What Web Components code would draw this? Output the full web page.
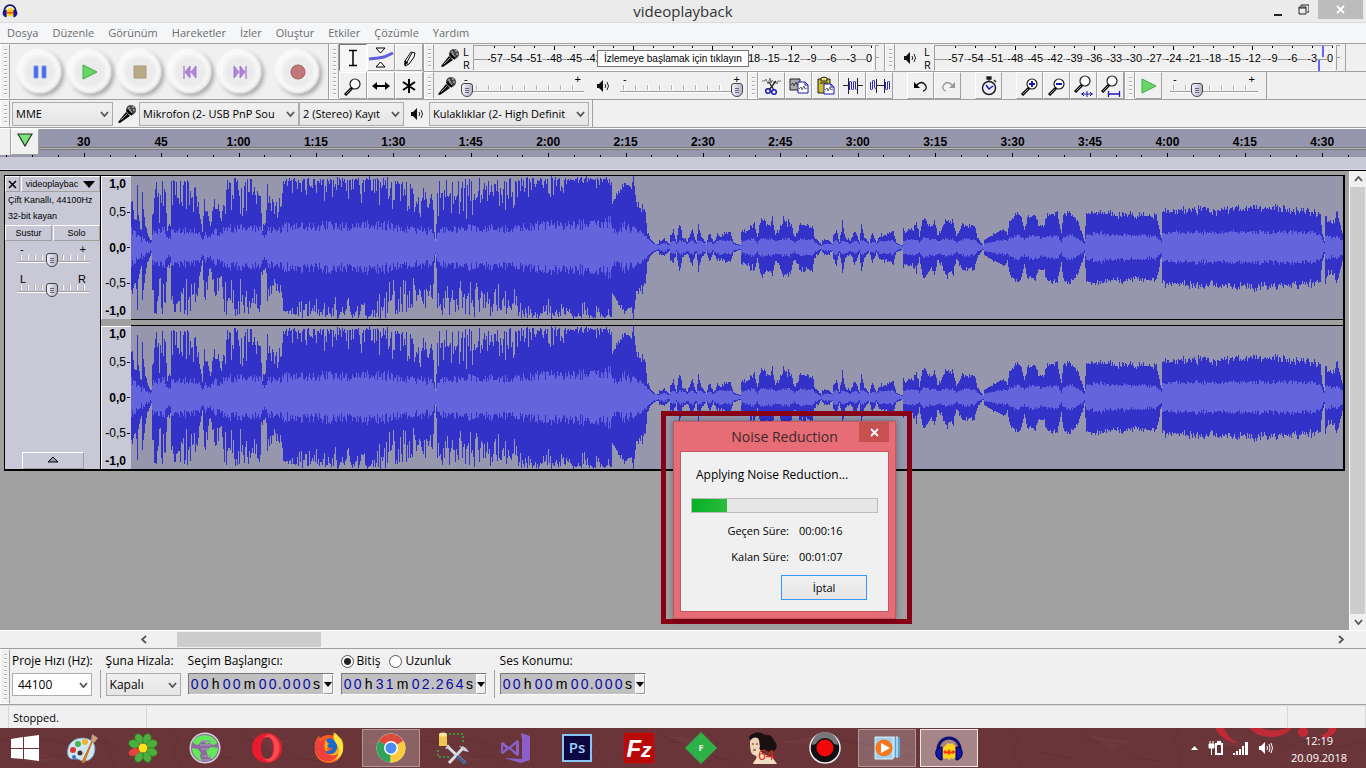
<!DOCTYPE html>
<html lang="tr">
<head>
<meta charset="utf-8">
<meta name="viewport" content="width=device-width, initial-scale=1">
<title>videoplayback</title>
<style>
    html, body {
        margin: 0;
        height: 100%;
    }

    body {
        --ui: "Open Sans", "Noto Sans", sans-serif;
        --arial: "Liberation Sans", Arial, sans-serif;
        --line: #a0a0a0;
        --face: #f0f0f0;
        --track: #c8c8d6;
        --wave-back: #9696ac;
        font: 11px/16px var(--ui);
        color: #000;
        background: var(--face);
        overflow: hidden;
    }
</style>
</head>
<body>
<audio-editor></audio-editor>

<script>
/* icons, each one is [width, height, markup] */

const MIC = `<path d="M2 19L1 18 9 8l4 4L3 19z" fill="#111"/><path d="M4 16l6-6" stroke="#999"/>
    <circle cx="14" cy="6" r="5" fill="#444"/><path d="M11 4h2M15 3h2M12 6h2M16 6h2M13 8h2M14 1h1" stroke="#ddd"/><path d="M10 6l5 5" stroke="#000" stroke-width="2"/>`;
const LENS = `<path d="M2 19l7-7" stroke="#000" stroke-width="3"/><path d="M3 18l5-5" stroke="#999"/>
    <circle cx="12" cy="8" r="5" fill="#fff" stroke="#222" stroke-width="1.2"/>`;
const HEADPHONES = `<path d="M4 22V15a11 11 0 0 1 22 0v7" fill="none" stroke="#101070" stroke-width="3"/>
    <path d="M9 23V14l3-3 2-2 2 1 2-1 3 3 1 3v8l-3 2-2-1-2 2-2-2-3 1z" fill="#ffd21c"/>
    <path d="M9 18l2-2 2 2 2-3 2 3 2-2 3 2-3 2-2-1-2 2-2-2-2 1z" fill="#ff3a10"/>
    <path d="M8 13c-5 0-7 4-6 8 1 3 3 5 6 5zM22 13c5 0 7 4 6 8-1 3-3 5-6 5z" fill="#1515b0" stroke="#00003c"/>`;

const ICONS = {
    app: [30, 28, HEADPHONES],
    minimize: [10, 12, `<path d="M1 11h8" stroke="#222" stroke-width="2"/>`],
    restore: [11, 11, `<path d="M3 2V1h8v7H9" fill="none" stroke="#222"/><path d="M1 3h7v7H1z" fill="none" stroke="#222"/><path d="M1 4h7" stroke="#222"/>`],
    close: [9, 9, `<path d="M1 1l7 7M8 1L1 8" stroke="#fff" stroke-width="1.8"/>`],
    cross: [9, 9, `<path d="M1 1l7 7M8 1L1 8" stroke="#000" stroke-width="1.5"/>`],
    pause: [14, 14, `<path d="M1 1h4v12H1zM9 1h4v12H9z" fill="#4468f0" stroke="#7d93e6"/>`],
    play: [16, 16, `<path d="M1 1l14 7-14 7z" fill="#67d867" stroke="#3fa84a"/>`],
    stop: [14, 14, `<path d="M1 1h12v12H1z" fill="#b8aa88" stroke="#a89a78"/>`],
    back: [14, 14, `<path d="M1 1v13" stroke="#8a5cb8"/><path d="M7 1v12L2 7zM13 1v12L8 7z" fill="#b184dd" stroke="#8f62bb" stroke-width=".7"/>`],
    forward: [14, 14, `<path d="M13 1v13" stroke="#8a5cb8"/><path d="M7 1v12l5-6zM1 1v12l5-6z" fill="#b184dd" stroke="#8f62bb" stroke-width=".7"/>`],
    record: [16, 16, `<circle cx="8" cy="8" r="7" fill="#c27878" stroke="#a05656"/>`],
    cursor: [20, 20, `<path d="M6 2.5h8M6 17.5h8M10 3v14" stroke="#000" stroke-width="1.5"/>`],
    envelope: [26, 22, `<path d="M8 1h9l-4.500 5zM8 20h9l-4.500-5z" fill="#fff" stroke="#000"/><path d="M1 12l9-1 6-1 9-4" fill="none" stroke="#5c5ce0" stroke-width="3"/>`],
    pencil: [20, 20, `<path d="M6 13l6-9 4 1-1 4-5 7-4 2z" fill="#fff" stroke="#000"/><path d="M8 14l5-9M6 17v-4l3 2" stroke="#000" fill="#000"/>`],
    zoom: [20, 20, LENS],
    shift: [20, 14, `<path d="M4 7h12" stroke="#000" stroke-width="2"/><path d="M6 3v8L1 7zM14 3v8l5-4z"/>`],
    multi: [20, 20, `<path d="M10 3v14M4 6l12 8M16 6L4 14" stroke="#000" stroke-width="2"/>`],
    mic: [20, 20, MIC],
    speaker: [14, 14, `<path d="M1 5h2l4-4v12L3 9H1z" fill="#111"/><path d="M9 5q1.500 2 0 4M11 3q3 4 0 8" fill="none" stroke="#222"/>`],
    cut: [22, 20, `<path d="M1 5h3l1-2 2 5 2-6 1 5 1-3 2 3 1-2 2 3 1-3h3" fill="none" stroke="#777"/><path d="M8 14l7-9M13 14L8 6" stroke="#222" stroke-width="1.3"/><circle cx="7" cy="15" r="2.300" fill="none" stroke="#1a1ab0" stroke-width="1.500"/><circle cx="13" cy="16" r="2.300" fill="none" stroke="#1a1ab0" stroke-width="1.500"/>`],
    copy: [20, 18, `<path d="M1 2h10v11H1z" fill="#aaa" stroke="#222"/><path d="M2 8l2-2 1 3 2-4 1 3 2-1" fill="none" stroke="#444"/><path d="M9 5h7l3 3v8H9z" fill="#fff" stroke="#1a1ab0"/><path d="M16 5v3h3" fill="none" stroke="#1a1ab0"/><path d="M10 12l2-2 1 3 2-4 1 3 2-1" fill="none" stroke="#666"/>`],
    paste: [20, 20, `<path d="M2 3h12v14H2z" fill="#c8bd35" stroke="#222"/><path d="M5 5V2l3-1 3 1v3z" fill="#e8e070" stroke="#222"/><path d="M4 7h8" stroke="#222"/><path d="M8 8h7l3 3v7H8z" fill="#fff" stroke="#1a1ab0"/><path d="M15 8v3h3" fill="none" stroke="#1a1ab0"/><path d="M9 14l2-2 1 3 2-4 1 3 2-1" fill="none" stroke="#666"/>`],
    trim: [20, 18, `<g shape-rendering="crispEdges" fill="#222"><path d="M0 8h5v1H0zM15 8h5v1h-5zM5 1h1v16H5zM14 1h1v16h-1z"/></g><path d="M6.500 13V5l1-1 1 1v7l1 1 1-1V5l1-1 1 1v7l1 1" fill="none" stroke="#2a2ac0"/>`],
    silence: [20, 18, `<g shape-rendering="crispEdges" fill="#222"><path d="M6 8h8v1H6zM6 2h1v14H6zM14 2h1v14h-1z"/></g><path d="M.500 5v7l1 1 1-1V4l1-1 1 1v6l1 2M15.500 5v6l1 2 1-1V5l1-1 1 1v7" fill="none" stroke="#2a2ac0"/>`],
    undo: [16, 14, `<path d="M3 7q6-7 10 0 1 4-3 5" fill="none" stroke="#111" stroke-width="1.300"/><path d="M1 3v6h6z"/>`],
    redo: [16, 14, `<path d="M13 7Q7 0 3 7q-1 4 3 5" fill="none" stroke="#999" stroke-width="1.300"/><path d="M15 3v6H9z" fill="#999"/>`],
    watch: [18, 20, `<circle cx="9" cy="12" r="6.500" fill="#eef" stroke="#222" stroke-width="1.500"/><path d="M7 1h4v2H7zM9 3v2M14 4l2 2" stroke="#222" stroke-width="1.300"/><path d="M6 9l3 4 4-3" fill="none" stroke="#1a1ab0" stroke-width="1.500"/>`],
    zoomin: [20, 20, LENS + `<path d="M9 8h6M12 5v6" stroke="#1a1ab0" stroke-width="2"/>`],
    zoomout: [20, 20, LENS + `<path d="M9 8h6" stroke="#1a1ab0" stroke-width="2"/>`],
    fitsel: [20, 22, `<g transform="translate(-1 -2)">${LENS}</g><path d="M7 19h12M10 17l-2 2 2 2M16 17l2 2-2 2M13 16v6" fill="none" stroke="#1a1ab0"/>`],
    fitall: [20, 22, `<g transform="translate(-1 -2)">${LENS}</g><path d="M7 19h12M7.500 16v6M18.500 16v6" stroke="#1a1ab0" stroke-width="1.300"/>`],
    pin: [16, 14, `<path d="M1 1h14L8 13z" fill="#7ee07e" stroke="#1b3a1b" stroke-width="1.200"/>`],
    drop: [9, 6, `<path d="M1 1l3.500 4L8 1" fill="none" stroke="#555" stroke-width="1.800"/>`],
    up: [9, 6, `<path d="M1 5l3.500-4L8 5" fill="none" stroke="#555" stroke-width="1.800"/>`],
    left: [6, 9, `<path d="M5 1L1 4.500 5 8" fill="none" stroke="#555" stroke-width="1.800"/>`],
    right: [6, 9, `<path d="M1 1l4 3.500L1 8" fill="none" stroke="#555" stroke-width="1.800"/>`],
    black: [12, 7, `<path d="M0 0h12L6 7z"/>`],
    small: [8, 5, `<path d="M0 0h8L4 5z"/>`],
    collapse: [12, 7, `<path d="M1 6h10L6 1z" fill="#9696ac" stroke="#000"/>`],

    windows: [28, 26, `<path d="M0 4l12-2v11H0zM13 2L28 0v13H13zM0 14h12v10L0 23zM13 14h15v12l-15-2z" fill="#fff"/>`],
    paint: [34, 32, `<path d="M4 17C5 9 15 4 24 7c8 3 8 11 5 17-3 5-9 6-13 4-3-2-5-1-8-1-4-1-5-5-4-10z" fill="#cfe6f4" stroke="#7fb0cf"/><circle cx="16" cy="21" r="2.500" fill="#4b3035"/><circle cx="9" cy="18" r="3" fill="#d83a2e"/><circle cx="14" cy="12" r="3" fill="#4bb34f"/><circle cx="21" cy="10" r="3" fill="#f2b22c"/><circle cx="10" cy="25" r="2" fill="#3a70c8"/><path d="M30 5L20 31l-2-1z" fill="#f08a24" stroke="#c9661a"/><path d="M27 9l1-7 6 4-4 5z" fill="#c9a27c"/>`],
    flower: [30, 30, `<g fill="#4cae3c" stroke="#2d7f2d" stroke-width=".6"><ellipse cx="11" cy="6" rx="4" ry="5.500" transform="rotate(-22 11 6)"/><ellipse cx="19" cy="6" rx="4" ry="5.500" transform="rotate(22 19 6)"/><ellipse cx="24" cy="11" rx="5.500" ry="4" transform="rotate(-22 24 11)"/><ellipse cx="24" cy="19" rx="5.500" ry="4" transform="rotate(22 24 19)"/><ellipse cx="19" cy="24" rx="4" ry="5.500" transform="rotate(-22 19 24)"/><ellipse cx="11" cy="24" rx="4" ry="5.500" transform="rotate(22 11 24)"/><ellipse cx="6" cy="11" rx="5.500" ry="4" transform="rotate(22 6 11)"/></g><ellipse cx="6" cy="19" rx="5.500" ry="3.600" transform="rotate(-22 6 19)" fill="#e2453a"/><circle cx="15" cy="15" r="4.500" fill="#ffe21a"/>`],
    globe: [32, 32, `<circle cx="16" cy="16" r="15.500" fill="#d5d2dc"/><circle cx="16" cy="16" r="14" fill="#8c6a9c"/><path d="M4 9c3-4 7-6 12-6l5 1c4 2 6 4 7 7l-3 2-5-2-3 1-1-3-4 1-3 3-4-1zM3 16l6 1 3 4-1 3 2 5c-5-1-10-7-10-13zM17 17l6-2 6 1c0 5-3 9-6 11l-4-2-1-4z" fill="#62e858"/><path d="M12 9h10M11 13h12M12 17h8M13 24h9M12 28h9" stroke="#a58bb4" stroke-width="1.500"/>`],
    opera: [30, 30, `<path fill-rule="evenodd" d="M15 0a15 15 0 1 0 0 30 15 15 0 0 0 0-30zm0 4c4 0 6 5 6 11s-2 11-6 11-6-5-6-11 2-11 6-11z" fill="#e81c2e"/><path d="M18 1a15 15 0 0 1 0 28c-2 0-4-1-6-4 2 1 3 1 4 1 4-1 6-5 6-11S20 5 16 4c-1 0-2 0-4 1 2-3 4-4 6-4z" fill="#fb4a4e"/>`],
    firefox: [32, 32, `<circle cx="16" cy="17" r="14" fill="#ff5a1f"/><path d="M2 18C1 11 4 6 6 4l1 5c2-1 4-2 6-1l3-1-2 4 4 2-4 3 1 5c4 3 9-1 9-6 0-6-6-8-3-15 1 3 4 5 5 8l2-2c3 5 3 12 0 17-6 9-24 11-26-5z" fill="#ffab1a"/><path d="M2 18C1 11 4 6 6 4l1 5c2-1 4-2 6-1-2 3-2 6-1 9 2 6 8 8 13 5-2 6-8 9-14 7C5 27 3 23 2 18z" fill="#f0413a"/><path d="M13 8c2-3 7-2 9 1 3 4 3 9-1 12-3 2-7 1-9-2 4 1 6-1 8-3-3 1-4-1-6-2 1-2 3-2 3-2-2-1-3-2-4-4z" fill="#1769d2"/><path d="M22 1c5 4 9 9 8 17-1 5-4 8-7 10 4-7 4-12 0-17-3-4-2-7-1-10z" fill="#ffe53b"/>`],
    chrome: [32, 32, `<circle cx="16" cy="16" r="14.500" fill="#ddd"/><path d="M16 16L3.500 9A14.500 14.500 0 0 1 28.500 9z" fill="#dd4b3a"/><path d="M16 16l12.500-7A14.500 14.500 0 0 1 15 30.500z" fill="#f8cc3c"/><path d="M16 16l-1 14.500A14.500 14.500 0 0 1 3.500 9z" fill="#2fa35a"/><circle cx="16" cy="16" r="7" fill="#fff"/><circle cx="16" cy="16" r="5.500" fill="#4b8bf5"/>`],
    tools: [34, 32, `<path d="M13 2h14v9M2 18v7h12" fill="none" stroke="#3fae3f" stroke-dasharray="2 2" stroke-width="1.500"/><path d="M3 2h8v12H3z" fill="#eec553"/><ellipse cx="7" cy="2.500" rx="4" ry="2" fill="#fbe79b"/><path d="M12 15l17 16M28 15L13 31" stroke="#d8dde2" stroke-width="3"/><path d="M21 24l9 8" stroke="#3f5f92" stroke-width="3"/><path d="M23 14l7 2 3 4-5-1zM9 17l3-5 3 4z" fill="#c9ced4"/>`],
    vs: [32, 32, `<path d="M22 1l9 3v24l-9 3-17-5 18 1V7z" fill="#8a60c8"/><path fill-rule="evenodd" d="M2 11l2-1 6 5 8-7 2 1v14l-2 1-8-7-6 5-2-1zm2 3v5l3-3zm13-2l-5 4 5 4z" fill="#8a60c8"/>`],
    ps: [30, 28, `<path d="M1 1h28v26H1z" fill="#0c0740" stroke="#86c5f4" stroke-width="2"/><text x="15" y="19" text-anchor="middle" font-family="Open Sans, sans-serif" font-weight="600" font-size="15" fill="#9fd2fb">Ps</text>`],
    filezilla: [32, 32, `<path d="M1 1h30v30H1z" fill="#b80a0a" stroke="#d30808" stroke-dasharray="2 1"/><text x="16" y="25" text-anchor="middle" font-family="Liberation Sans, sans-serif" font-weight="700" font-style="italic" font-size="24" fill="#fff">F<tspan font-size="21">z</tspan></text>`],
    diamond: [32, 32, `<path d="M16 0l16 16-16 16L0 16z" fill="#2db146"/><text x="16" y="19" text-anchor="middle" font-family="Open Sans, sans-serif" font-weight="700" font-size="9" fill="#fff">F</text>`],
    aida: [32, 32, `<path d="M2 5C5 0 14-1 18 3c5-1 8 2 9 6 4 3 3 8 0 10-4 2-7 0-9-2l-4 5-8-5z" fill="#18110f"/><path d="M3 9c3-5 8-4 9-1l1 7-4 6-4 1C3 19 3 13 3 9z" fill="#efd3b4"/><path d="M5 22l7-6 4 6 9 3 5 7H6c1-4 5-5 3-8z" fill="#f0dcc1"/><path d="M5 12h2M9 12h2M6 18h3" stroke="#4a2a20"/><text x="19" y="28" text-anchor="middle" font-family="Open Sans, sans-serif" font-size="14" fill="#df2a14">64</text>`],
    rec: [32, 32, `<circle cx="16" cy="16" r="15" fill="#111" stroke="#eee" stroke-width="1.500"/><path d="M3 13a13 13 0 0 1 26 0q-13-5-26 0z" fill="#777"/><circle cx="16" cy="16" r="10" fill="#111"/><circle cx="16" cy="16" r="8.500" fill="#f20808"/>`],
    media: [28, 28, `<path d="M7 3h20v20H7z" fill="#5aa5cf"/><path d="M24 2v22M21 2v22" stroke="#fff"/><path d="M2 3h18v22H2z" fill="#9fd2ec" stroke="#d9f1fb"/><circle cx="11" cy="14" r="8.500" fill="#f5781e"/><path d="M8 9v10l9-5z" fill="#fff"/>`],
    tray: [9, 6, `<path d="M1 5l3.500-4L8 5z" fill="#fff"/>`],
    power: [16, 16, `<path d="M7 3h2V1h4v2h2v12H7z" fill="#fff"/><path d="M9 5h4v8H9z" fill="#6a3236"/><path d="M1 4h5v4H1zM2 1v3M5 1v3M3.500 8v7" fill="#fff" stroke="#fff"/>`],
    signal: [16, 14, `<path d="M0 12h2v2H0zM3 10h2v4H3zM6 8h2v6H6zM9 5h2v9H9zM12 1h3v13h-3z" fill="#fff"/>`],
    sound: [16, 14, `<path d="M1 5h2l4-4v12L3 9H1z" fill="#fff"/><path d="M9 5q1 2 0 4M11 3q2 4 0 8M13 2q3 5 0 10" fill="none" stroke="#fff"/>`]
};

class BaseComp extends HTMLElement {
    constructor() {
        super();
        this.attachShadow({ mode: "open" });
    }

    connectedCallback() {
        const template = document.createElement("template");
        template.innerHTML = this.render();
        this.shadowRoot.replaceChildren(template.content.cloneNode(true));
    }

    attr(name, fallback = "") {
        return this.getAttribute(name) ?? fallback;
    }
}

class AuIcon extends BaseComp {
    render() {
        const [w, h, body] = ICONS[this.attr("name")];
        const width = this.attr("size", w);
        const height = Math.round(width * h / w);
        return `
            <style>
                :host { display: inline-flex; flex: none; }
                svg { display: block; }
            </style>
            <svg width="${width}" height="${height}" viewBox="0 0 ${w} ${h}" aria-hidden="true">${body}</svg>
        `;
    }
}

class TitleBar extends BaseComp {
    render() {
        return `
            <style>
                :host { display: grid; grid-template-columns: 1fr auto 1fr; height: 22px; background: #ebebeb; border-bottom: 1px solid #dadbdc; }
                .app { padding: 3px 2px; }
                h1 { margin: 0; font: 15px/22px var(--ui); color: #333; }
                .buttons { display: flex; justify-content: flex-end; align-items: flex-start; gap: 3px; padding-right: 3px; }
                button { border: 0; padding: 0; width: 23px; height: 19px; background: none; display: grid; place-items: center; }
                .close { width: 45px; background: #bcbcbc; }
            </style>
            <span class="app"><au-icon name="app" size="16"></au-icon></span>
            <h1><slot></slot></h1>
            <div class="buttons">
                <button aria-label="Simge durumuna küçült"><au-icon name="minimize"></au-icon></button>
                <button aria-label="Önceki boyut"><au-icon name="restore"></au-icon></button>
                <button class="close" aria-label="Kapat"><au-icon name="close"></au-icon></button>
            </div>
        `;
    }
}

class MenuBar extends BaseComp {
    render() {
        const items = this.attr("items").split(",");
        return `
            <style>
                :host { display: flex; height: 20px; background: #f5f6f7; }
                a { padding: 0 7px; line-height: 20px; color: #6d6d6d; text-decoration: none; }
            </style>
            ${items.map(item => `<a href="#">${item}</a>`).join("")}
        `;
    }
}

/* a dockable bar: grip on the left, its controls in the slot */
class ToolBar extends BaseComp {
    render() {
        return `
            <style>
                :host { display: flex; flex: none; box-sizing: border-box; min-height: 27px; border-right: 1px solid var(--line); }
                .grip { width: 10px; flex: none; box-sizing: border-box; border: 1px solid #fff; border-right-color: var(--line); padding: 4px 2px 3px 3px; }
                .grip i { display: block; height: 100%; background: repeating-linear-gradient(#b0b0b0 0 1px, #fff 1px 2px, transparent 2px 4px); }
                .body { display: flex; align-items: center; }
            </style>
            <div class="grip"><i></i></div>
            <div class="body"><slot></slot></div>
        `;
    }
}

class RoundButton extends BaseComp {
    render() {
        return `
            <style>
                :host { display: flex; width: 50px; justify-content: center; }
                button {
                    width: 42px; height: 42px; border: 0; border-radius: 50%; padding: 0;
                    display: grid; place-items: center;
                    background: radial-gradient(circle, #ebebeb 0 44%, #fafafa 66%);
                    box-shadow: -1px -1px 3px 1px #fff, 2px 2px 4px 1px #a4a4a4, inset -1px -1px 2px #ddd;
                }
            </style>
            <button aria-label="${this.attr("label")}"><au-icon name="${this.attr("icon")}"></au-icon></button>
        `;
    }
}

class ToolButton extends BaseComp {
    render() {
        return `
            <style>
                :host { display: block; width: 27px; height: 27px; }
                button {
                    width: 100%; height: 100%; padding: 0; display: grid; place-items: center; background: #f0f0f0;
                    border: 1px solid; border-color: #fff var(--line) var(--line) #fff; overflow: hidden;
                }
                :host([pressed]) button { background: #f6f6f6; border-color: #777 #fff #fff #777; }
            </style>
            <button aria-label="${this.attr("label")}"><au-icon name="${this.attr("icon")}"></au-icon></button>
        `;
    }
}

/* covered="from,to" leaves out the numbers that lie under an open hint */
class LevelMeter extends BaseComp {
    render() {
        const [from, to] = this.attr("covered", "0,0").split(",").map(Number);
        let cells = "";
        for (let db = 57; db > 0; db -= 3) {
            const text = db <= from && db >= to ? "" : `<span>-${db}</span>`;
            cells += `<li class="${db % 12 ? "" : "long"}">${text}</li>`;
        }
        const peak = this.hasAttribute("peak") ? `<i class="peak"></i><i class="peak low"></i>` : "";
        return `
            <style>
                :host { display: flex; align-items: center; height: 27px; font: 11px/12px var(--arial); }
                .lr { width: 10px; font: 11px/13px var(--ui); }
                .scale { position: relative; flex: 1; height: 26px; border: 1px solid; border-color: var(--line) #fff #fff var(--line); box-sizing: border-box; }
                ol { list-style: none; display: flex; margin: 0; padding: 0 0 0 11px; height: 100%; background: linear-gradient(#999, #999) 0 13px / 100% 1px no-repeat; }
                li { flex: 1; display: flex; flex-direction: column; align-items: center; gap: 4px; min-width: 0; }
                li::before { content: ""; width: 1px; height: 2px; background: #000; }
                li.long::before { height: 4px; margin-bottom: -2px; }
                li:last-child { flex: 0 0 11px; align-items: flex-end; }
                span { background: #f0f0f0; }
                .clip { width: 3px; height: 24px; margin-left: 2px; border-left: 1px solid var(--line); border-top: 1px solid var(--line); background: linear-gradient(#999, #999) 0 11px / 100% 1px no-repeat; }
                .peak { position: absolute; right: 9px; top: 0; width: 2px; height: 11px; background: #6464ff; }
                .low { right: 13px; top: 14px; }
            </style>
            <div class="lr">L<br>R</div>
            <div class="scale"><ol>${cells}<li><span>0</span></li></ol>${peak}</div>
            <i class="clip"></i>
        `;
    }
}

class LevelSlider extends BaseComp {
    render() {
        return `
            <style>
                :host { display: block; --step: 12px; font: 11px/8px var(--arial); }
                .ends { display: flex; justify-content: space-between; padding: 0 3px; }
                input {
                    appearance: none; display: block; width: 100%; height: 14px; margin: 0;
                    background:
                        linear-gradient(#a0a0a0, #a0a0a0) 0 8px / 100% 1px no-repeat,
                        linear-gradient(#fff, #fff) 0 9px / 100% 1px no-repeat,
                        repeating-linear-gradient(90deg, #b4b4b4 0 1px, #fff 1px 2px, transparent 2px var(--step)) 3px 2px / calc(100% - 5px) 5px no-repeat;
                }
                input::-webkit-slider-thumb {
                    appearance: none; width: 12px; height: 14px; border: 1px solid #444;
                    border-radius: 3px 3px 6px 6px;
                    background:
                        linear-gradient(#667, #667) 3px 4px / 4px 1px no-repeat,
                        linear-gradient(#667, #667) 3px 6px / 4px 1px no-repeat,
                        linear-gradient(#667, #667) 3px 8px / 4px 1px no-repeat,
                        linear-gradient(90deg, #f2f2fa, #b4b4c8);
                }
            </style>
            <div class="ends"><span>${this.attr("from", "-")}</span><span>${this.attr("to", "+")}</span></div>
            <input type="range" min="0" max="100" value="${this.attr("value")}" aria-label="${this.attr("label")}">
        `;
    }
}

class PickList extends BaseComp {
    render() {
        return `
            <style>
                :host { display: inline-grid; height: 24px; }
                select, au-icon { grid-area: 1 / 1; }
                select {
                    appearance: none; width: 100%; height: 100%; margin: 0; padding: 0 14px 0 3px; border: 1px solid #acacac; border-radius: 0;
                    background: linear-gradient(#f0f0f0, #e5e5e5); font: inherit; color: #000;
                }
                :host([editable]) select { background: #fff; padding-left: 5px; }
                au-icon { place-self: center end; margin-right: 4px; pointer-events: none; }
            </style>
            <select id="pick" aria-label="${this.attr("label")}"><option>${this.textContent}</option></select>
            <au-icon name="drop"></au-icon>
        `;
    }
}

class TimeRuler extends BaseComp {
    render() {
        let labels = "";
        for (let s = 30; s <= 270; s += 15) {
            const min = Math.floor(s / 60);
            labels += `<li>${min ? min + ":" + String(s % 60).padStart(2, "0") : s}</li>`;
        }
        let ticks = "";
        for (let i = 0; i < 53; i++) {
            ticks += `<i class="${i % 3 === 0 ? "big" : ""}"></i>`;
        }
        return `
            <style>
                :host { display: block; background: var(--wave-back); border-bottom: 1px solid #000; overflow: hidden; }
                .top { display: flex; height: 22px; }
                .edge { width: 10px; height: 26px; background: var(--face); border-right: 1px solid var(--line); }
                button { position: relative; width: 28px; height: 26px; flex: none; padding: 3px 0 0; border: 1px solid; border-color: #fff var(--line) var(--line) #fff; background: var(--face); display: grid; justify-items: center; align-content: start; }
                ol { flex: 1; display: flex; margin: 0; padding: 0 5px 0 6px; list-style: none; height: 18px; border-bottom: 1px solid #777; box-shadow: 0 1px #b8b8b8, 0 2px #777; font: bold 12px/26px var(--arial); }
                li { flex: 1; text-align: center; }
                .ticks { display: flex; align-items: flex-end; height: 6px; margin: 0 5px 0 -6px; }
                .ticks i { flex: 1; height: 2px; background: linear-gradient(#000, #000) center / 1px 100% no-repeat; }
                .ticks i.big:not(:first-child) { height: 4px; }
                .area { height: 12px; background: var(--track); border-bottom: 1px solid #dedee6; }
            </style>
            <div class="top">
                <div class="edge"></div>
                <button aria-label="Oynatma başlığını sabitle"><au-icon name="pin"></au-icon></button>
                <ol>${labels}</ol>
            </div>
            <div class="ticks">${ticks}</div>
            <div class="area"></div>
        `;
    }
}

class TrackPanel extends BaseComp {
    render() {
        return `
            <style>
                :host { display: flex; flex-direction: column; width: 95px; flex: none; background: var(--track); border-right: 1px solid #000; font: 9px/16px var(--arial); }
                button { font: inherit; color: #000; background: var(--track); border: 1px solid; border-color: #fff var(--line) var(--line) #fff; padding: 0; height: 16px; line-height: 13px; }
                .head { display: flex; gap: 1px; }
                .head button { display: flex; align-items: center; justify-content: center; }
                .close { width: 15px; }
                .name { flex: 1; gap: 5px; }
                .info { padding: 0 3px; height: 33px; white-space: nowrap; }
                .pair { display: grid; grid-template-columns: 1fr 1fr; gap: 1px; }
                level-slider { --step: 7px; margin: 4px 11px 4px 12px; }
                .collapse { align-self: center; margin-top: auto; width: 62px; height: 17px; }
            </style>
            <div class="head">
                <button class="close" aria-label="Parçayı kapat"><au-icon name="cross"></au-icon></button>
                <button class="name"><slot></slot><au-icon name="black"></au-icon></button>
            </div>
            <div class="info">Çift Kanallı, 44100Hz<br>32-bit kayan</div>
            <div class="pair"><button>Sustur</button><button>Solo</button></div>
            <level-slider value="48" label="Kazanç"></level-slider>
            <level-slider value="48" from="L" to="R" label="Denge"></level-slider>
            <button class="collapse" aria-label="Daralt"><au-icon name="collapse"></au-icon></button>
        `;
    }
}

class AmpScale extends BaseComp {
    render() {
        return `
            <style>
                :host {
                    display: grid; grid-template-rows: 22px 28px 1fr 28px 22px; align-items: center; justify-items: end; width: 30px; box-sizing: border-box;
                    background: var(--track); box-shadow: inset 1px 1px #fff; font: 12px/16px var(--arial); padding-right: 5px;
                }
                .first { align-self: start; }
                .last { align-self: end; }
                .tick { display: flex; align-items: center; margin-right: -4px; gap: 1px; }
                .tick::after { content: ""; width: 3px; height: 1px; background: #000; }
            </style>
            <b class="first">1,0</b><span class="tick">0,5</span><b class="tick">0,0</b><span class="tick">-0,5</span><b class="last">-1,0</b>
        `;
    }
}

/* envelope points: x, lowest peak, highest peak, rms (in pixels from the middle line) */
const QUIET = [
    [0, 3, 9, 2], [5, 6, 10, 4], [10, 2, 4, 2], [11, 10, 14, 5], [14, 12, 20, 7], [17, 4, 6, 3], [20, 20, 27, 7], [23, 8, 12, 6],
    [28, 4, 7, 3], [31, 10, 16, 6], [33, 12, 20, 6], [37, 4, 5, 3], [39, 20, 27, 7], [42, 8, 12, 6], [47, 3, 4, 3], [50, 12, 19, 6],
    [54, 4, 5, 3], [58, 8, 15, 6], [65, 10, 17, 6], [71, 12, 18, 6], [74, 4, 5, 3], [80, 1, 2, 1], [81, 13, 20, 6], [87, 13, 20, 7],
    [94, 17, 30, 8], [97, 8, 12, 4], [100, 23, 30, 9], [103, 22, 33, 9], [110, 16, 24, 8], [112, 24, 32, 8], [115, 10, 15, 6],
    [119, 13, 22, 7], [123, 22, 33, 8], [131, 18, 29, 8], [134, 8, 12, 4], [140, 18, 26, 8], [146, 17, 25, 8], [152, 16, 26, 8],
    [155, 7, 12, 4], [161, 1, 3, 1]
];
const ENVELOPE = [
    [0, 20, 58, 16], [2, 24, 50, 15], [5, 18, 44, 12], [6, 40, 66, 14], [7, 20, 34, 11], [10, 14, 20, 7], [11, 50, 62, 10], [12, 30, 45, 8],
    [16, 10, 16, 5], [20, 4, 8, 4], [21, 26, 66, 14], [34, 20, 68, 17], [36, 12, 20, 8], [39, 12, 30, 9], [40, 24, 68, 17],
    [60, 24, 68, 17], [66, 26, 64, 15], [71, 10, 18, 8], [74, 20, 68, 14], [79, 12, 24, 9], [83, 20, 66, 16], [90, 24, 30, 13],
    [92, 26, 70, 18], [128, 24, 68, 19], [132, 8, 24, 10], [136, 24, 68, 17], [146, 18, 44, 16], [152, 42, 69, 20], [200, 38, 71, 21],
    [240, 38, 71, 22], [254, 30, 71, 21], [270, 22, 68, 18], [290, 26, 64, 17], [301, 24, 55, 15], [304, 5, 9, 5], [306, 22, 68, 16],
    [330, 24, 69, 18], [380, 30, 70, 19], [392, 38, 71, 21], [440, 40, 71, 22], [480, 60, 71, 25], [481, 42, 47, 16], [488, 44, 60, 17],
    [492, 54, 68, 22], [500, 50, 62, 17], [502, 70, 71, 19], [505, 40, 50, 16], [509, 30, 54, 15], [514, 32, 38, 11], [516, 10, 16, 8],
    [522, 3, 6, 3], [527, 2, 3, 2],
    ...QUIET.map(p => [p[0] + 528, ...p.slice(1)]),
    ...QUIET.map(p => [p[0] + 690, ...p.slice(1)]),
    [852, 6, 7, 3], [855, 8, 10, 4], [864, 13, 16, 6], [872, 15, 20, 7], [875, 12, 13, 6], [877, 22, 27, 9], [883, 29, 36, 11], [888, 30, 37, 11],
    [892, 15, 17, 7], [895, 27, 34, 10], [903, 28, 34, 11], [906, 20, 24, 10], [912, 20, 24, 9], [914, 29, 36, 11], [925, 30, 37, 11],
    [929, 13, 14, 5], [931, 29, 35, 10], [937, 31, 38, 12], [945, 24, 29, 9], [949, 14, 18, 7], [952, 5, 7, 3], [954, 30, 36, 12],
    [966, 31, 40, 14], [989, 25, 36, 11], [990, 30, 39, 12], [1005, 26, 34, 11], [1006, 19, 34, 11], [1007, 29, 37, 12], [1024, 27, 35, 10],
    [1029, 7, 9, 5], [1030, 31, 40, 14], [1060, 32, 43, 15], [1080, 30, 41, 14], [1100, 32, 43, 15], [1120, 34, 45, 15], [1150, 32, 43, 15],
    [1180, 30, 41, 14], [1188, 28, 38, 12], [1190, 12, 14, 7], [1192, 5, 7, 4], [1193, 24, 36, 12], [1199, 20, 28, 9], [1205, 27, 38, 11], [1208, 18, 24, 8], [1211, 9, 12, 6]
];

class WaveView extends BaseComp {
    at(x) {
        let i = 0;
        while (i < ENVELOPE.length - 2 && ENVELOPE[i + 1][0] <= x) i++;
        const a = ENVELOPE[i];
        const b = ENVELOPE[i + 1];
        const t = Math.min(1, (x - a[0]) / (b[0] - a[0]));
        return [1, 2, 3].map(k => a[k] + (b[k] - a[k]) * t);
    }

    outline(tops, bottoms) {
        const mid = 71;
        let d = `M0 ${mid}`;
        tops.forEach((v, x) => d += `V${mid - v}H${x + 1}`);
        for (let x = bottoms.length - 1; x >= 0; x--) {
            d += `V${mid + 1 + bottoms[x]}H${x}`;
        }
        return d + "z";
    }

    render() {
        let seed = 41;
        const rand = () => (seed = (seed * 16807) % 2147483647) / 2147483647;
        const up = [], down = [], rmsUp = [], rmsDown = [];
        for (let x = 0; x < 1211; x++) {
            const [lo, hi, rms] = this.at(x);
            const loud = x < 502;
            const pow = x < 152 || (x > 254 && x < 392) ? .9 : loud ? .6 : 1;
            const gain = loud ? 1.25 : 1;
            const shared = rand();
            const mix = () => gain * (shared * .5 + rand() * .5) ** pow;
            up.push(Math.round(Math.min(hi - (loud ? rand() * 4 : 0), lo + (hi - lo) * mix())));
            down.push(Math.round(Math.min(hi - (loud ? rand() * 4 : 0), lo + (hi - lo) * mix())));
            const spread = loud ? .5 : .3;
            const soft = Math.max(1, Math.round(rms * (1 - spread / 2 + rand() * spread)));
            rmsUp.push(soft);
            rmsDown.push(Math.max(1, soft - (rand() > .6 ? 1 : 0)));
        }
        return `
            <style>
                :host { display: block; background: var(--wave-back); }
                svg { display: block; width: 100%; height: 100%; }
            </style>
            <svg viewBox="0 0 1211 143" preserveAspectRatio="none" shape-rendering="crispEdges" role="img" aria-label="Dalga biçimi">
                <path d="${this.outline(up, down)}" fill="#3232c8"/>
                <path d="${this.outline(rmsUp, rmsDown)}" fill="#6464dc"/>
            </svg>
        `;
    }
}

class AudioTrack extends BaseComp {
    render() {
        return `
            <style>
                :host { display: flex; border: 1px solid #000; border-width: 1px 2px 2px 1px; }
                .channels { flex: 1; display: grid; grid-template-rows: 143px 143px; gap: 7px; }
                .channel { display: grid; grid-template-columns: auto 1fr; }
                wave-view { box-shadow: 0 1px #000; }
                .channel + .channel wave-view { box-shadow: 0 -1px #000; }
            </style>
            <track-panel>videoplaybac</track-panel>
            <div class="channels">
                <div class="channel"><amp-scale></amp-scale><wave-view></wave-view></div>
                <div class="channel"><amp-scale></amp-scale><wave-view></wave-view></div>
            </div>
        `;
    }
}

class ScrollTrack extends BaseComp {
    render() {
        const [a, b] = this.hasAttribute("vertical") ? ["up", "drop"] : ["left", "right"];
        return `
            <style>
                :host { display: flex; height: 17px; background: var(--face); }
                :host([vertical]) { flex-direction: column; width: 16px; height: auto; border-left: 1px solid #fff; }
                button { width: 16px; height: 16px; border: 0; padding: 0; background: none; display: grid; place-items: center; }
                .lane { flex: 1; display: flex; padding: 0 25px; }
                .thumb { width: 144px; height: 15px; margin-top: 1px; background: #cdcdcd; }
                :host([vertical]) .lane { padding: 0 1px 0 0; }
                :host([vertical]) .thumb { width: 100%; height: 100%; margin: 0; }
            </style>
            <button aria-label="Geri"><au-icon name="${a}"></au-icon></button>
            <div class="lane"><div class="thumb"></div></div>
            <button aria-label="İleri"><au-icon name="${b}"></au-icon></button>
        `;
    }
}

class TimeBox extends BaseComp {
    render() {
        const cells = [...this.attr("value").replace(/ /g, "")].map(c => {
            const kind = c === "." ? "dot" : /\d/.test(c) ? "digit" : c;
            return `<span class="${kind}">${c}</span>`;
        }).join("");
        return `
            <style>
                :host { display: flex; height: 20px; border: 1px solid; border-color: #777 #fff #fff #777; background: #c0c0c0; font: 14px/20px var(--arial); }
                .cells { display: flex; padding: 0 1px; }
                span { width: 10px; text-align: center; }
                .digit, .dot { color: #0a0aaa; }
                .dot { width: 4px; }
                .h { width: 12px; }
                .m { width: 16px; }
                button { width: 10px; padding: 0; border: 1px solid; border-color: #fff #999 #999 #fff; background: var(--face); display: grid; place-items: center; }
            </style>
            <div class="cells">${cells}</div>
            <button aria-label="${this.attr("label")}"><au-icon name="small"></au-icon></button>
        `;
    }
}

class SelectionBar extends BaseComp {
    render() {
        return `
            <style>
                :host { display: flex; border: 1px solid var(--line); border-width: 1px 0; height: 55px; font: 12px/18px var(--ui); }
                tool-bar { border: 0; }
                .fields { display: flex; }
                .field { display: flex; flex-direction: column; gap: 3px; padding-bottom: 5px; margin-right: 7px; }
                .field:first-child { margin-left: 2px; }
                .radios { display: flex; gap: 9px; }
                label { display: flex; align-items: center; gap: 3px; }
                input { appearance: none; margin: 0; width: 13px; height: 13px; border: 1px solid #555; border-radius: 50%; background: #fff; }
                input:checked { background: radial-gradient(circle, #222 0 3px, #fff 4px); }
                .rule { width: 1px; background: var(--line); margin: 18px 5px 3px 0; }
                pick-list { height: 23px; }
                .wide { width: 80px; }
                .mid { width: 75px; }
            </style>
            <tool-bar>
                <div class="fields">
                    <div class="field"><span>Proje Hızı (Hz):</span><pick-list class="wide" editable label="Proje Hızı (Hz)">44100</pick-list></div>
                    <i class="rule"></i>
                    <div class="field"><span>Şuna Hizala:</span><pick-list class="mid" label="Şuna Hizala">Kapalı</pick-list></div>
                    <div class="field"><span>Seçim Başlangıcı:</span><time-box value="00 h 00 m 00.000 s" label="Seçim Başlangıcı biçimi"></time-box></div>
                    <div class="field">
                        <div class="radios">
                            <label><input type="radio" name="end" checked>Bitiş</label>
                            <label><input type="radio" name="end">Uzunluk</label>
                        </div>
                        <time-box value="00 h 31 m 02.264 s" label="Bitiş biçimi"></time-box>
                    </div>
                    <i class="rule"></i>
                    <div class="field"><span>Ses Konumu:</span><time-box value="00 h 00 m 00.000 s" label="Ses Konumu biçimi"></time-box></div>
                </div>
            </tool-bar>
        `;
    }
}

class StatusBar extends BaseComp {
    render() {
        return `
            <style>
                :host { display: grid; grid-template-columns: 9px 138px 1fr 78px; height: 22px; border-top: 1px solid #dcdcdc; line-height: 24px; }
                span { border-right: 1px solid #d7d7d7; padding-left: 4px; }
                span:first-of-type { padding: 0; }
            </style>
            <span></span><span><slot></slot></span><span></span><span></span>
        `;
    }
}

class NoiseDialog extends BaseComp {
    render() {
        return `
            <style>
                :host { display: block; width: 223px; box-sizing: border-box; background: #e66d75; border: 1px solid #c15a60; padding: 0 6px 6px; box-shadow: 0 0 6px rgba(0, 0, 0, .35); }
                header { display: grid; grid-template-columns: 30px 1fr 30px; height: 29px; }
                h2 { margin: 0; font: 14px/29px var(--ui); color: #40282b; text-align: center; }
                header button { width: 30px; height: 20px; border: 0; padding: 0; background: #c75050; display: grid; place-items: center; }
                .body { border: 1px solid #c15a60; background: var(--face); padding: 14px 10px 11px; }
                p { margin: 0 5px 14px; font-size: 12px; line-height: 18px; }
                .bar { height: 13px; border: 1px solid #bcbcbc; background: #e6e6e6; }
                .bar i { display: block; width: 19%; height: 100%; background: linear-gradient(100deg, #06b025, #2cbc3e); }
                dl { display: grid; grid-template-columns: 98px 1fr; gap: 10px; margin: 10px 0; line-height: 16px; }
                dt { text-align: right; }
                dd { margin: 0; }
                footer { display: flex; justify-content: flex-end; padding-right: 11px; }
                footer button { width: 86px; height: 25px; font: inherit; color: #000; border: 1px solid #3399ff; background: linear-gradient(#f0f0f0, #e5e5e5); }
            </style>
            <header><span></span><h2>Noise Reduction</h2><button aria-label="Kapat"><au-icon name="close"></au-icon></button></header>
            <div class="body">
                <p>Applying Noise Reduction...</p>
                <div class="bar" role="progressbar" aria-valuenow="19"><i></i></div>
                <dl><dt>Geçen Süre:</dt><dd>00:00:16</dd><dt>Kalan Süre:</dt><dd>00:01:07</dd></dl>
                <footer><button>İptal</button></footer>
            </div>
        `;
    }
}

class TaskItem extends BaseComp {
    render() {
        return `
            <style>
                :host { display: block; width: 58px; height: 38px; }
                button { width: 100%; height: 100%; padding: 0; border: 1px solid transparent; background: none; display: grid; place-items: center; }
                :host([open]) button { background: rgba(255, 255, 255, .22); border-color: rgba(255, 255, 255, .35); }
                :host([active]) button { background: rgba(255, 255, 255, .4); border-color: #f0e8e8; }
            </style>
            <button aria-label="${this.attr("label")}"><au-icon name="${this.attr("icon")}"></au-icon></button>
        `;
    }
}

class TaskBar extends BaseComp {
    render() {
        return `
            <style>
                :host { position: relative; display: flex; align-items: center; height: 40px; background: #6a3539; color: #fff; overflow: hidden; }
                .stone { position: absolute; inset: 0; width: 100%; height: 100%; }
                .art { position: absolute; right: 25px; top: 0; }
                .start { position: relative; width: 50px; height: 40px; border: 0; padding: 0; background: none; display: grid; place-items: center; margin-right: 2px; }
                .items { position: relative; display: flex; gap: 4px; flex: 1; }
                .tray { position: relative; display: flex; align-items: center; gap: 9px; padding-right: 19px; }
                time { text-align: center; padding: 2px 0 0 8px; line-height: 17px; }
            </style>
            <svg class="stone" aria-hidden="true"><defs>
                <pattern id="stone" width="420" height="40" patternUnits="userSpaceOnUse"><path d="M0 12l30 5 20-6 26 9 28-8 14 9M104 12l10 28M170 0l9 12-7 12 10 16M240 5l12 9 28 2 16 14 24 3M340 0l-6 11 9 10-5 19M40 30l30-3 18 9M200 24l34 7" fill="none" stroke="#4f2529" stroke-opacity=".4"/>
                <path d="M20 34l22-8 20 6zM250 8l40 5-16 9zM360 14l34-5 12 10z" fill="#7a4246" fill-opacity=".3"/></pattern></defs>
                <rect width="100%" height="100%" fill="url(#stone)"/></svg>
            <svg class="art" width="130" height="18" aria-hidden="true">
                <path d="M4 0h9q3 9 14 16Q10 12 4 0z" fill="#c02a36"/>
                <path d="M38 0h12q12 5 26 0h4q-4 8-18 9Q46 9 38 0z" fill="#c02a36"/>
                <circle cx="92" cy="4" r="5" fill="#c02a36"/>
                <path d="M118 0h8q-2 7-12 11-2-2-4-4 7-1 8-7z" fill="#c02a36"/>
            </svg>
            <button class="start" aria-label="Başlat"><au-icon name="windows"></au-icon></button>
            <div class="items"><slot></slot></div>
            <div class="tray">
                <au-icon name="tray"></au-icon><au-icon name="power"></au-icon><au-icon name="signal"></au-icon><au-icon name="sound"></au-icon>
                <time>12:19<br>20.09.2018</time>
            </div>
        `;
    }
}

class AudioEditor extends BaseComp {
    render() {
        return `
            <style>
                :host { position: relative; display: flex; flex-direction: column; min-height: 100vh; }
                .docks { border: 1px solid var(--line); border-width: 1px 0; display: flex; }
                .docks.second { border-top: 0; }
                .transport { display: flex; padding: 0 5px; }
                .transport :last-child { margin-left: 8px; }
                .tools { display: grid; grid-template-columns: repeat(3, 28px); gap: 1px 0; }
                .tools tool-button { width: 28px; }
                .rows { flex: 1; display: flex; flex-direction: column; }
                .row { display: flex; height: 27px; }
                .row + .row { border-top: 1px solid var(--line); }
                .mic { margin: 0 3px 0 6px; }
                .meter { width: 416px; margin-right: 5px; }
                .out { margin: 0 7px 0 8px; }
                .mixer { display: flex; align-items: center; padding: 0 4px 0 3px; }
                .mixer .mic { margin: 0 4px 0 0; }
                .mixer .out { margin: 0 10px 0 12px; }
                .volume { width: 123px; }
                .speed { width: 88px; margin: 0 8px; }
                .gap { width: 14px; }
                .devices { display: flex; align-items: center; padding: 0 3px 0 2px; }
                .devices .mic { margin: 0 2px 0 4px; }
                .devices .out { margin: 0 5px 0 6px; }
                .host { width: 101px; }
                .device { width: 160px; }
                .count { width: 105px; }
                time-ruler { border-top: 1px solid #fff; }
                .project { flex: 1; display: flex; background: #a0a0a0; }
                .tracks { flex: 1; padding: 4px 4px 0; }
                .bottom { display: flex; border-top: 1px solid #fff; }
                .bottom scroll-track { flex: 1; margin: 0 17px 0 136px; }
                .hint { position: absolute; left: 597px; top: 50px; padding: 0 6px; border: 1px solid #767676; background: #fff; font: 10px/15px var(--arial); }
                .mark { position: absolute; left: 661px; top: 411px; border: 5px solid #880015; padding: 5px 11px 0 7px; }
            </style>
            <title-bar>videoplayback</title-bar>
            <menu-bar items="Dosya,Düzenle,Görünüm,Hareketler,İzler,Oluştur,Etkiler,Çözümle,Yardım"></menu-bar>
            <div class="docks">
                <tool-bar>
                    <div class="transport">
                        <round-button icon="pause" label="Duraklat"></round-button>
                        <round-button icon="play" label="Çal"></round-button>
                        <round-button icon="stop" label="Durdur"></round-button>
                        <round-button icon="back" label="Başa atla"></round-button>
                        <round-button icon="forward" label="Sona atla"></round-button>
                        <round-button icon="record" label="Kaydet"></round-button>
                    </div>
                </tool-bar>
                <tool-bar>
                    <div class="tools">
                        <tool-button icon="cursor" label="Seçim" pressed></tool-button>
                        <tool-button icon="envelope" label="Zarf"></tool-button>
                        <tool-button icon="pencil" label="Çizim"></tool-button>
                        <tool-button icon="zoom" label="Yakınlaştırma"></tool-button>
                        <tool-button icon="shift" label="Zaman kaydırma"></tool-button>
                        <tool-button icon="multi" label="Çoklu araç"></tool-button>
                    </div>
                </tool-bar>
                <div class="rows">
                    <div class="row">
                        <tool-bar>
                            <au-icon class="mic" name="mic"></au-icon>
                            <level-meter class="meter" covered="39,21"></level-meter>
                        </tool-bar>
                        <tool-bar>
                            <au-icon class="out" name="speaker"></au-icon>
                            <level-meter class="meter" peak></level-meter>
                        </tool-bar>
                    </div>
                    <div class="row">
                        <tool-bar>
                            <div class="mixer">
                                <au-icon class="mic" name="mic"></au-icon>
                                <level-slider class="volume" value="0" label="Kayıt düzeyi"></level-slider>
                                <au-icon class="out" name="speaker"></au-icon>
                                <level-slider class="volume" value="100" label="Çalma düzeyi"></level-slider>
                            </div>
                        </tool-bar>
                        <tool-bar>
                            <tool-button icon="cut" label="Kes"></tool-button>
                            <tool-button icon="copy" label="Kopyala"></tool-button>
                            <tool-button icon="paste" label="Yapıştır"></tool-button>
                            <tool-button icon="trim" label="Kırp"></tool-button>
                            <tool-button icon="silence" label="Sessizleştir"></tool-button>
                            <i class="gap"></i>
                            <tool-button icon="undo" label="Geri al"></tool-button>
                            <tool-button icon="redo" label="Yinele"></tool-button>
                            <i class="gap"></i>
                            <tool-button icon="watch" label="Eş kilitle"></tool-button>
                            <i class="gap"></i>
                            <tool-button icon="zoomin" label="Yakınlaştır"></tool-button>
                            <tool-button icon="zoomout" label="Uzaklaştır"></tool-button>
                            <tool-button icon="fitsel" label="Seçimi sığdır"></tool-button>
                            <tool-button icon="fitall" label="Projeyi sığdır"></tool-button>
                        </tool-bar>
                        <tool-bar>
                            <tool-button icon="play" label="Hızda çal"></tool-button>
                            <level-slider class="speed" value="28" label="Çalma hızı"></level-slider>
                        </tool-bar>
                    </div>
                </div>
            </div>
            <div class="docks second">
                <tool-bar>
                    <div class="devices">
                        <pick-list class="host" label="Ses sunucusu">MME</pick-list>
                        <au-icon class="mic" name="mic"></au-icon>
                        <pick-list class="device" label="Kayıt aygıtı">Mikrofon (2- USB PnP Sou</pick-list>
                        <pick-list class="count" label="Kayıt kanalları">2 (Stereo) Kayıt</pick-list>
                        <au-icon class="out" name="speaker"></au-icon>
                        <pick-list class="device" label="Çalma aygıtı">Kulaklıklar (2- High Definit</pick-list>
                    </div>
                </tool-bar>
            </div>
            <time-ruler></time-ruler>
            <div class="project">
                <div class="tracks"><audio-track></audio-track></div>
                <scroll-track vertical></scroll-track>
            </div>
            <div class="bottom"><scroll-track></scroll-track></div>
            <selection-bar></selection-bar>
            <status-bar>Stopped.</status-bar>
            <task-bar>
                <task-item icon="paint" label="Paint"></task-item>
                <task-item icon="flower" label="ICQ"></task-item>
                <task-item icon="globe" label="Tor"></task-item>
                <task-item icon="opera" label="Opera"></task-item>
                <task-item icon="firefox" label="Firefox"></task-item>
                <task-item icon="chrome" label="Chrome" open></task-item>
                <task-item icon="tools" label="Veritabanı araçları"></task-item>
                <task-item icon="vs" label="Visual Studio"></task-item>
                <task-item icon="ps" label="Photoshop"></task-item>
                <task-item icon="filezilla" label="FileZilla"></task-item>
                <task-item icon="diamond" label="F"></task-item>
                <task-item icon="aida" label="AIDA64"></task-item>
                <task-item icon="rec" label="Kaydedici"></task-item>
                <task-item icon="media" label="Media Player" open></task-item>
                <task-item icon="app" label="Audacity" open active></task-item>
            </task-bar>
            <div class="hint" role="tooltip">İzlemeye başlamak için tıklayın</div>
            <div class="mark"><noise-dialog></noise-dialog></div>
        `;
    }
}

customElements.define("au-icon", AuIcon);
customElements.define("title-bar", TitleBar);
customElements.define("menu-bar", MenuBar);
customElements.define("tool-bar", ToolBar);
customElements.define("round-button", RoundButton);
customElements.define("tool-button", ToolButton);
customElements.define("level-meter", LevelMeter);
customElements.define("level-slider", LevelSlider);
customElements.define("pick-list", PickList);
customElements.define("time-ruler", TimeRuler);
customElements.define("track-panel", TrackPanel);
customElements.define("amp-scale", AmpScale);
customElements.define("wave-view", WaveView);
customElements.define("audio-track", AudioTrack);
customElements.define("scroll-track", ScrollTrack);
customElements.define("time-box", TimeBox);
customElements.define("selection-bar", SelectionBar);
customElements.define("status-bar", StatusBar);
customElements.define("noise-dialog", NoiseDialog);
customElements.define("task-item", TaskItem);
customElements.define("task-bar", TaskBar);
customElements.define("audio-editor", AudioEditor);
</script>
</body>
</html>
